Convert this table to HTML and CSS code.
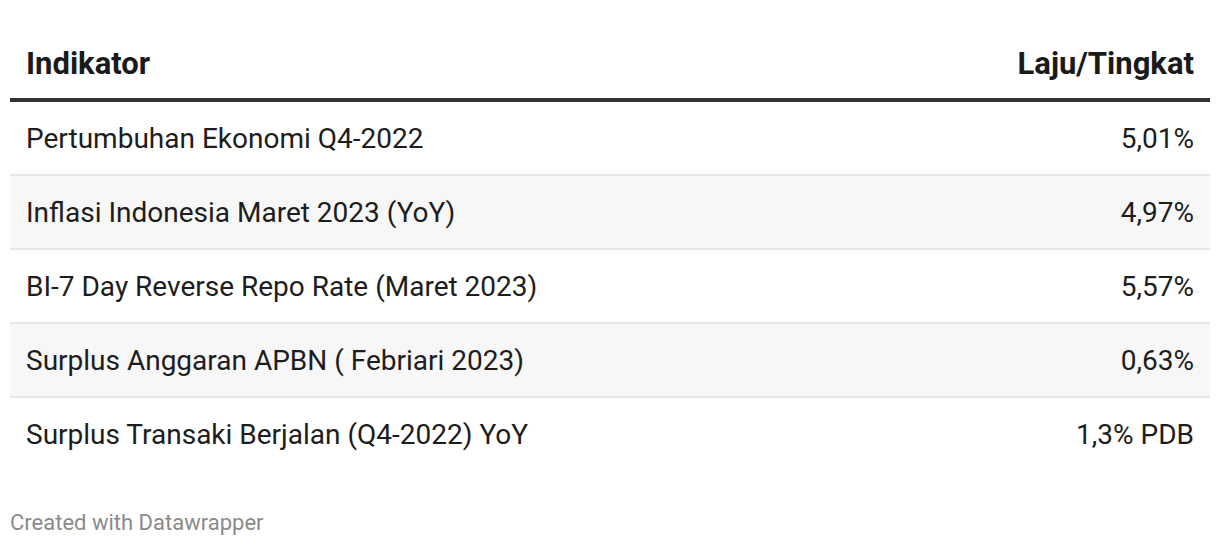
FILE: index.html
```html
<!DOCTYPE html>
<html lang="id">
<head>
<meta charset="utf-8">
<title>Indikator</title>
<link rel="stylesheet" href="styles.css">
</head>
<body>
<div class="wrap">
  <table class="dw-table">
    <thead>
      <tr>
        <th class="left">Indikator</th>
        <th class="right">Laju/Tingkat</th>
      </tr>
    </thead>
    <tbody>
      <tr><td class="left">Pertumbuhan Ekonomi Q4-2022</td><td class="right">5,01%</td></tr>
      <tr class="stripe"><td class="left">Inflasi Indonesia Maret 2023 (YoY)</td><td class="right">4,97%</td></tr>
      <tr><td class="left">BI-7 Day Reverse Repo Rate (Maret 2023)</td><td class="right">5,57%</td></tr>
      <tr class="stripe"><td class="left">Surplus Anggaran APBN ( Febriari 2023)</td><td class="right">0,63%</td></tr>
      <tr class="last"><td class="left">Surplus Transaki Berjalan (Q4-2022) YoY</td><td class="right">1,3% PDB</td></tr>
    </tbody>
  </table>
  <div class="footer">Created with Datawrapper</div>
</div>
</body>
</html>
```
FILE: styles.css
```css
html, body {
  margin: 0;
  padding: 0;
  background: #ffffff;
}
body {
  font-family: Roboto, "Liberation Sans", sans-serif;
  color: #1d1d1d;
}
.wrap {
  padding: 0 10px;
}
.dw-table {
  width: 1200px;
  border-collapse: collapse;
  font-size: 28px;
  line-height: 34px;
}
.dw-table th {
  font-size: 31px;
  font-weight: 700;
  padding: 47px 16px 17px 16px;
  border-bottom: 4px solid #333333;
  color: #1a1a1a;
}
.dw-table td {
  padding: 20px 16px 18px 16px;
  border-bottom: 2px solid #e6e6e6;
  font-weight: 400;
}
.dw-table tr.last td {
  border-bottom: none;
}
.dw-table tr.stripe td {
  background: #f7f7f7;
}
.left {
  text-align: left;
}
.right {
  text-align: right;
}
.footer {
  margin-top: 40px;
  font-size: 22px;
  line-height: 26px;
  color: #8a8a8a;
}
```
